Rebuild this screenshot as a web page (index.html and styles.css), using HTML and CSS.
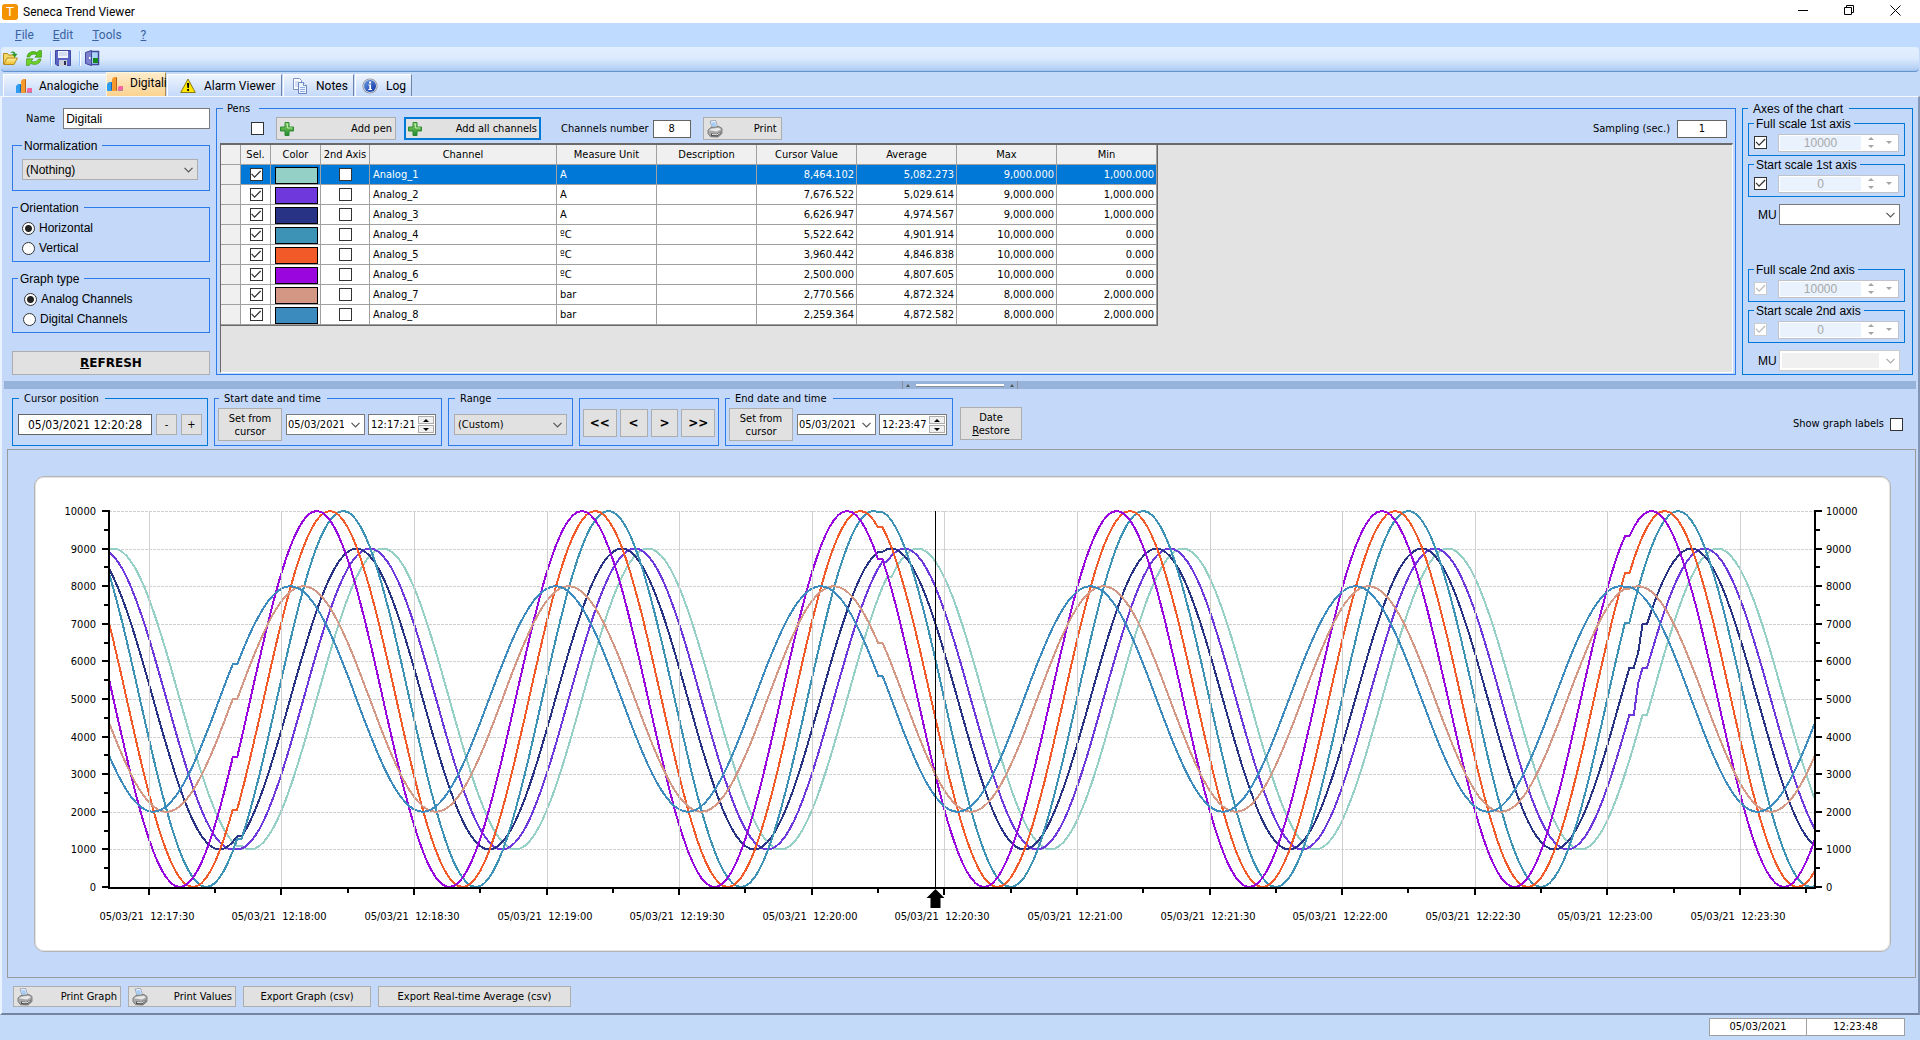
FILE: index.html
```html
<!DOCTYPE html>
<html lang="en">
<head>
<meta charset="utf-8">
<title>Seneca Trend Viewer</title>
<link rel="stylesheet" href="styles.css">
</head>
<body>
<svg class="sprite" aria-hidden="true">
  <defs>
    <linearGradient id="g-green" x1="0" y1="0" x2="0" y2="1"><stop offset="0" stop-color="#8fd46a"/><stop offset="1" stop-color="#1f8a2a"/></linearGradient>
    <linearGradient id="g-blue" x1="0" y1="0" x2="1" y2="1"><stop offset="0" stop-color="#6a9be8"/><stop offset="1" stop-color="#0b2f9c"/></linearGradient>
    <linearGradient id="g-folder" x1="0" y1="0" x2="0" y2="1"><stop offset="0" stop-color="#fff2a0"/><stop offset="1" stop-color="#f0bd2c"/></linearGradient>
  </defs>
  <symbol id="i-bars" viewBox="0 0 16 16">
    <path d="M0 8l2-2h3v8l-1 1H0z" fill="#2f9df0"/><path d="M4 7l1-1v8l-1 1z" fill="#1767b8"/>
    <path d="M5 3l2-2h3v13l-1 1H5z" fill="#f79a2e"/><path d="M9 2l1-1v13l-1 1z" fill="#b5641a"/>
    <path d="M11 11l1-1h4v4l-1 1h-4z" fill="#f5679f"/>
    <path d="M9 15l7-1v1z" fill="#8f8fa0"/>
  </symbol>
  <symbol id="i-warn" viewBox="0 0 16 16">
    <path d="M8 1L15.300 14.500H.7z" fill="#ffe600" stroke="#8a7a1a" stroke-width="1" stroke-linejoin="round"/>
    <path d="M7 5h2.200l-.4 5H7.400z" fill="#000"/><rect x="7.200" y="11" width="1.800" height="1.900" fill="#000"/>
  </symbol>
  <symbol id="i-notes" viewBox="0 0 16 16">
    <path d="M1.500.5h6l2 2v9h-8z" fill="#fff" stroke="#7c93c8"/>
    <path d="M3 4h4M3 6h4M3 8h3" stroke="#a9c0e8"/>
    <path d="M6.500 4.500h5l3 3v8h-8z" fill="#eef4ff" stroke="#6d86c2"/>
    <path d="M11.500 4.500v3h3" fill="#fff" stroke="#6d86c2"/><path d="M8 9.500h5M8 11.500h5M8 13.500h5" stroke="#8fb0e6"/>
  </symbol>
  <symbol id="i-info" viewBox="0 0 16 16">
    <circle cx="8" cy="8" r="7.600" fill="#8c8f98"/><circle cx="8" cy="8" r="6.800" fill="#d6dbe4"/>
    <circle cx="8" cy="8" r="6" fill="url(#g-blue)"/>
    <path d="M6.500 6.500H9V11h1v1H6.300v-1h1V7.500h-.8z" fill="#fff"/><rect x="7.100" y="3.500" width="2" height="2" fill="#fff"/>
  </symbol>
  <symbol id="i-open" viewBox="0 0 16 16">
    <path d="M.5 14V3.500h4l1 1.500h6v3" fill="#f5d968" stroke="#b48a1c"/>
    <path d="M.8 14.500L4 8h10.500L11 14.500z" fill="url(#g-folder)" stroke="#b48a1c"/>
    <path d="M7 3c2-2.500 5-2 5.500.8h2L11.800 7.500 9 4h1.700C10.200 2.600 8.600 2.300 7 3z" fill="#2e9a2b"/>
  </symbol>
  <symbol id="i-refresh" viewBox="0 0 16 16">
    <path d="M1 7C1.200 2.700 6.500 0 11 2.500L13 .6h2.600v6.600H8.800l2.100-2.200C8 3.300 4.500 4.500 3.600 7z" fill="#58c51a" stroke="#3a8a10" stroke-width=".6"/>
    <path d="M15 9c-.2 4.300-5.500 7-10 4.500L3 15.400H.4V8.800h6.800L5.100 11c2.900 1.700 6.400.5 7.300-2z" fill="#6fd32a" stroke="#3a8a10" stroke-width=".6"/>
  </symbol>
  <symbol id="i-save" viewBox="0 0 16 16">
    <path d="M.5.5h15v15H2L.5 14z" fill="#5a64c4" stroke="#3f489c"/>
    <rect x="3" y="1" width="10" height="7" fill="#eef2fb"/><path d="M4 3h8M4 5h8" stroke="#b9c6e6"/>
    <rect x="4" y="10" width="8" height="6" fill="#c9ceda"/><rect x="9" y="11" width="2" height="4" fill="#2b2f50"/>
  </symbol>
  <symbol id="i-exit" viewBox="0 0 16 16">
    <rect x="6.500" y="1.500" width="8" height="13" fill="#a9d4f5" stroke="#42479c" stroke-width="1.500"/>
    <path d="M1.500 2.500l6-2v15l-6-2z" fill="#7b81cf" stroke="#42479c"/><rect x="9" y="8" width="5" height="5" fill="#148a1c"/>
    <rect x="5" y="7" width="1.500" height="2" fill="#fff"/>
  </symbol>
  <symbol id="i-plus" viewBox="0 0 14 14">
    <path d="M5 .5h4V5h4.500v4H9v4.500H5V9H.5V5H5z" fill="url(#g-green)" stroke="#2f8a35"/><path d="M6 2h1.500v4H12" fill="none" stroke="#b9eaa0"/>
  </symbol>
  <symbol id="i-printer" viewBox="0 0 16 18">
    <path d="M3 1l5.500-.6L11 8 5.500 9z" fill="#f4f8ff" stroke="#8a96ad" stroke-width=".8"/><path d="M4 2.500l4-.4 1.300 4-4 .8z" fill="#a5cdf8"/>
    <path d="M1 10l3-2.500 8-1 3 2v5l-4 3.500-7.500-.3L1 13.500z" fill="#a9a9a9" stroke="#6a6a6a" stroke-width=".8"/>
    <path d="M1.500 10.200l3-1.500 7-.9 2.500 1.400-4 2.400z" fill="#e8e8e8"/><path d="M4 13.500l5.500.5 4-2.500v2.200l-3.500 2.800-6-.4z" fill="#4e4e4e"/>
    <path d="M5 14.500l5 .3 3-2" fill="none" stroke="#e8e8e8"/>
  </symbol>
</svg>

<header class="titlebar">
  <span class="app-icon">T</span>
  <h1>Seneca Trend Viewer</h1>
  <div class="window-buttons">
    <button aria-label="Minimize"><svg width="10" height="10"><path d="M0 5.500h10" stroke="#000"/></svg></button>
    <button aria-label="Restore"><svg width="10" height="10" fill="none" stroke="#000"><path d="M.5 2.500h7v7h-7zM2.500 2.500v-2h7v7h-2"/></svg></button>
    <button aria-label="Close"><svg width="11" height="11"><path d="M.5.5l10 10M10.500.5l-10 10" stroke="#000"/></svg></button>
  </div>
</header>

<nav class="menubar">
  <a href="#"><u>F</u>ile</a><a href="#"><u>E</u>dit</a><a href="#"><u>T</u>ools</a><a href="#"><u>?</u></a>
</nav>

<div class="toolbar">
  <button aria-label="Open"><svg class="icon"><use href="#i-open"/></svg></button>
  <button aria-label="Reload"><svg class="icon"><use href="#i-refresh"/></svg></button>
  <i class="sep"></i>
  <button aria-label="Save"><svg class="icon"><use href="#i-save"/></svg></button>
  <i class="sep"></i>
  <button aria-label="Exit"><svg class="icon"><use href="#i-exit"/></svg></button>
</div>

<div class="tabs" role="tablist">
  <button role="tab" class="tab tab-first"><svg class="icon"><use href="#i-bars"/></svg>Analogiche</button>
  <button role="tab" class="tab active" aria-selected="true"><svg class="icon"><use href="#i-bars"/></svg>Digitali</button>
  <button role="tab" class="tab tab-alarm"><svg class="icon"><use href="#i-warn"/></svg>Alarm Viewer</button>
  <button role="tab" class="tab tab-notes"><svg class="icon"><use href="#i-notes"/></svg>Notes</button>
  <button role="tab" class="tab tab-log"><svg class="icon"><use href="#i-info"/></svg>Log</button>
</div>

<main class="page">
  <section class="settings">
    <div class="side">
      <div class="name-row"><label for="name">Name</label><input id="name" class="box" value="Digitali"></div>
      <fieldset class="group norm">
        <legend>Normalization</legend>
        <select class="combo grey" aria-label="Normalization"><option>(Nothing)</option></select>
      </fieldset>
      <fieldset class="group radios">
        <legend>Orientation</legend>
        <label><input type="radio" name="orient" checked>Horizontal</label>
        <label><input type="radio" name="orient">Vertical</label>
      </fieldset>
      <fieldset class="group radios graph-type">
        <legend>Graph type</legend>
        <label><input type="radio" name="gtype" checked>Analog Channels</label>
        <label><input type="radio" name="gtype">Digital Channels</label>
      </fieldset>
      <button class="btn refresh"><u>R</u>EFRESH</button>
    </div>

    <fieldset class="group pens">
      <legend>Pens</legend>
      <div class="pens-bar">
        <input type="checkbox" aria-label="Select all pens">
        <button class="btn with-icon add-pen"><svg class="icon-plus"><use href="#i-plus"/></svg>Add pen</button>
        <button class="btn with-icon add-all"><svg class="icon-plus"><use href="#i-plus"/></svg>Add all channels</button>
        <label for="chnum">Channels number</label><input id="chnum" class="box small center chnum" value="8">
        <button class="btn with-icon print"><svg class="icon-print"><use href="#i-printer"/></svg>Print</button>
        <label for="sampling" class="push">Sampling (sec.)</label><input id="sampling" class="box small center sampling" value="1">
      </div>
      <div class="grid-area">
        <table class="pen-table">
          <colgroup><col class="c-head"><col class="c-sel"><col class="c-color"><col class="c-axis"><col class="c-channel"><col class="c-num"><col class="c-num"><col class="c-num"><col class="c-num"><col class="c-num"><col class="c-num"></colgroup>
          <thead><tr><th></th><th>Sel.</th><th>Color</th><th>2nd Axis</th><th>Channel</th><th>Measure Unit</th><th>Description</th><th>Cursor Value</th><th>Average</th><th>Max</th><th>Min</th></tr></thead>
          <tbody id="pen-rows"></tbody>
        </table>
      </div>
    </fieldset>

    <fieldset class="group win axes">
      <legend>Axes of the chart</legend>
      <fieldset class="group win scale">
        <legend>Full scale 1st axis</legend>
        <input type="checkbox" checked aria-label="Auto full scale 1st axis">
        <span class="spinner"><input value="10000" disabled aria-label="Full scale 1st axis"><span class="updown"></span><span class="drop"></span></span>
      </fieldset>
      <fieldset class="group win scale">
        <legend>Start scale 1st axis</legend>
        <input type="checkbox" checked aria-label="Auto start scale 1st axis">
        <span class="spinner"><input value="0" disabled aria-label="Start scale 1st axis"><span class="updown"></span><span class="drop"></span></span>
      </fieldset>
      <div class="mu"><label for="mu1">MU</label><select id="mu1" class="combo white"><option></option></select></div>
      <fieldset class="group win scale second">
        <legend>Full scale 2nd axis</legend>
        <input type="checkbox" checked disabled aria-label="Auto full scale 2nd axis">
        <span class="spinner"><input value="10000" disabled aria-label="Full scale 2nd axis"><span class="updown"></span><span class="drop"></span></span>
      </fieldset>
      <fieldset class="group win scale">
        <legend>Start scale 2nd axis</legend>
        <input type="checkbox" checked disabled aria-label="Auto start scale 2nd axis">
        <span class="spinner"><input value="0" disabled aria-label="Start scale 2nd axis"><span class="updown"></span><span class="drop"></span></span>
      </fieldset>
      <div class="mu"><label for="mu2">MU</label><select id="mu2" class="combo white" disabled><option></option></select></div>
    </fieldset>
  </section>

  <div class="splitter"><span class="grip"><b></b><em></em><b></b></span></div>

  <section class="controls">
    <fieldset class="group win range-group cursor-group">
      <legend>Cursor position</legend>
      <input class="box center cursor-box" value="05/03/2021 12:20:28" aria-label="Cursor position">
      <button class="btn step">-</button><button class="btn step">+</button>
    </fieldset>
    <fieldset class="group range-group dates">
      <legend>Start date and time</legend>
      <button class="btn from-cursor">Set from<br>cursor</button>
      <select class="combo white date" aria-label="Start date"><option>05/03/2021</option></select>
      <span class="time"><input value="12:17:21" aria-label="Start time"><span class="time-spin"><button class="up" aria-label="Up"></button><button class="down" aria-label="Down"></button></span></span>
    </fieldset>
    <fieldset class="group range-group range">
      <legend>Range</legend>
      <select class="combo grey" aria-label="Range"><option>(Custom)</option></select>
    </fieldset>
    <fieldset class="group nav" aria-label="Move range">
      <button class="btn wide">&lt;&lt;</button><button class="btn">&lt;</button><button class="btn">&gt;</button><button class="btn wide">&gt;&gt;</button>
    </fieldset>
    <fieldset class="group range-group dates">
      <legend>End date and time</legend>
      <button class="btn from-cursor">Set from<br>cursor</button>
      <select class="combo white date" aria-label="End date"><option>05/03/2021</option></select>
      <span class="time"><input value="12:23:47" aria-label="End time"><span class="time-spin"><button class="up" aria-label="Up"></button><button class="down" aria-label="Down"></button></span></span>
    </fieldset>
    <button class="btn restore">Date<br><u>R</u>estore</button>
    <label class="show-labels">Show graph labels<input type="checkbox"></label>
  </section>

  <section class="chart-frame">
    <div class="chart-card"><svg id="chart" role="img" aria-label="Trend of eight analog channels"></svg></div>
  </section>

  <footer class="actions">
    <button class="btn with-icon pg"><svg class="icon-print"><use href="#i-printer"/></svg>Print Graph</button>
    <button class="btn with-icon pg"><svg class="icon-print"><use href="#i-printer"/></svg>Print Values</button>
    <button class="btn export">Export Graph (csv)</button>
    <button class="btn export-avg">Export Real-time Average (csv)</button>
  </footer>
</main>

<div class="statusbar"><span>05/03/2021</span><span>12:23:48</span></div>
<script src="chart.js"></script>
</body>
</html>
```

FILE: styles.css
```css
:root {
  --panel: #c4d9fa;
  --group: #2c7be8;
  --win: #0078d7;
  --btn: #e1e1e1;
  --btn-edge: #adadad;
  --tahoma: "DejaVu Sans Condensed", "DejaVu Sans", sans-serif;
  --arial: "Liberation Sans", Arial, sans-serif;
  --segoe: Roboto, "Open Sans", sans-serif;
  --chevron: url("data:image/svg+xml,%3Csvg xmlns='http://www.w3.org/2000/svg' width='9' height='6'%3E%3Cpath d='M.5 .8l4 4 4-4' fill='none' stroke='%23555' stroke-width='1.200'/%3E%3C/svg%3E");
  --chevron-off: url("data:image/svg+xml,%3Csvg xmlns='http://www.w3.org/2000/svg' width='9' height='6'%3E%3Cpath d='M.5 .8l4 4 4-4' fill='none' stroke='%23aaa' stroke-width='1.200'/%3E%3C/svg%3E");
}
* { box-sizing: border-box; }
body {
  margin: 0;
  min-height: 100vh;
  display: flex;
  flex-direction: column;
  background: #c4daf9;
  color: #000;
  font: 11px/14px var(--tahoma);
}
button, input, select { font: inherit; color: inherit; margin: 0; }
button { padding: 0; cursor: default; }
.sprite { position: absolute; width: 0; height: 0; }
.icon { width: 16px; height: 16px; flex: none; display: block; }
.icon-plus { width: 14px; height: 14px; }
.icon-print { width: 16px; height: 18px; }

.titlebar { display: flex; align-items: center; height: 23px; padding-left: 2px; background: #fff; }
.app-icon {
  width: 16px; height: 16px; border-radius: 3px; background: #f49200; color: #fff;
  font: 13px/16px var(--arial); text-align: center;
}
.titlebar h1 { margin: 0 0 0 5px; font: 12px/16px var(--segoe); }
.window-buttons { align-self: flex-start; margin-left: auto; padding-right: 2px; display: flex; }
.window-buttons button { width: 46px; height: 20px; border: 0; background: none; display: flex; align-items: center; justify-content: center; }

.menubar { display: flex; gap: 19px; height: 24px; padding-left: 15px; background: #bfdbff; font: 12px/24px var(--segoe); }
.menubar a { color: #3b629f; text-decoration: none; }

.toolbar {
  display: flex; align-items: center; height: 25px; padding: 0 0 2px 2px; margin: 0 1px;
  border-radius: 4px; border-bottom: 1px solid #6593cf;
  background: linear-gradient(#e3efff, #dbe9fd 50%, #b3d0f5 92%, #a3c2ea);
}
.toolbar button { width: 23px; height: 20px; border: 0; background: none; }
.toolbar .sep { width: 2px; height: 15px; margin: 0 3px 0 1px; border-left: 1px solid #9ac6ff; background: #fff; }

.tabs { display: flex; align-items: flex-end; height: 24px; padding-left: 3px; gap: 1px; }
.tab {
  display: flex; align-items: center; gap: 8px; height: 22px; padding: 0 0 0 8px;
  border: solid; border-width: 1px 1px 0 1px; border-color: #fff #6f86a8 #fff #fff;
  background: linear-gradient(#eef4fd, #c4d9fa);
  font: 12px/16px var(--segoe);
}
.tab-first { width: 103px; padding-left: 12px; gap: 7px; border-right: 0; }
.tab.active { width: 60px; height: 24px; margin-left: -1px; padding: 0 0 3px; gap: 7px; background: linear-gradient(#fdebca, #fbd391); border-color: #fff6e0 #a98a52 #fff #fff6e0; }
.tab-alarm { width: 115px; padding-left: 12px; }
.tab-notes { width: 71px; }
.tab-log { width: 57px; padding-left: 6px; }
.tab.active .icon { margin-top: 2px; }

.page {
  flex: 1; display: flex; flex-direction: column;
  border: solid; border-width: 1px 2px 2px 2px; border-color: #f4f8ff #8496b5 #74839e #eaf2ff;
  background: var(--panel);
}
.group { margin: 0; padding: 0; min-width: 0; border: 1px solid var(--group); }
.group.win { border-color: var(--win); }
.group > legend { padding: 0 4px; height: 15px; line-height: 16px; }

.settings { display: grid; grid-template-columns: 198px minmax(0, 1fr) 171px; gap: 6px; padding: 4px 5px 6px 10px; }
.side { display: flex; flex-direction: column; gap: 9px; padding-top: 7px; font: 12px/14px var(--arial); }
.side legend { padding: 0 5px 0 2px; }
.name-row { display: flex; align-items: center; gap: 8px; padding-left: 14px; font: 11px/14px var(--tahoma); }
.name-row .box { flex: 1; min-width: 0; font: 12px/14px var(--arial); }
.box { height: 21px; padding: 0 2px; border: 1px solid #7a7a7a; background: #fff; }
.box.small { height: 18px; border-color: #646464; }
.center { text-align: center; }
.norm { padding: 6px 11px 10px 9px; }
.combo {
  appearance: none; width: 100%; height: 21px; padding: 0 20px 0 3px; border: 1px solid #adadad; border-radius: 0; display: block;
  background: #e1e1e1 var(--chevron) no-repeat right 4px center;
}
.combo.white { background-color: #fff; border-color: #7a7a7a; opacity: 1; }
.combo.white:disabled {
  padding: 2px 20px 2px 2px; border-color: #ccc;
  background: var(--chevron-off) no-repeat right 4px center, linear-gradient(#f0f0f0, #f0f0f0) content-box no-repeat, #fff;
}
.radios { padding: 3px 9px; }
.radios legend { margin-left: -4px; }
.radios label { display: flex; align-items: center; gap: 4px; height: 20px; }
.graph-type label { padding-left: 2px; }
.graph-type label + label { padding-left: 1px; }
input[type=radio] { appearance: none; width: 13px; height: 13px; border: 1px solid #333; border-radius: 50%; background: #fff; }
input[type=radio]:checked { background: radial-gradient(circle, #222 0 3px, #fff 4px); }
input[type=checkbox] { appearance: none; flex: none; display: block; width: 13px; height: 13px; border: 1px solid #333; background: #fff; }
input[type=checkbox]:checked::before {
  content: ""; display: block; width: 11px; height: 11px; background: #333;
  clip-path: polygon(6% 48%, 14% 42%, 37% 66%, 88% 14%, 96% 22%, 37% 82%);
}
input[type=checkbox]:disabled { border-color: #ccc; }
input[type=checkbox]:disabled::before { background: #bbb; }

.btn { border: 1px solid var(--btn-edge); background: var(--btn); }
.btn.with-icon { display: flex; align-items: center; justify-content: space-between; height: 23px; padding: 0 3px; }
.refresh { height: 24px; margin-top: 9px; font: bold 12px/14px "DejaVu Sans", sans-serif; }

.pens { display: flex; flex-direction: column; padding: 1px 2px 1px 3px; }
.pens > legend { margin-left: 3px; padding-right: 9px; }
.pens-bar { display: flex; align-items: center; padding: 0 6px 0 31px; }
.add-pen { width: 120px; margin-left: 12px; }
.btn.add-all { width: 137px; margin: 0 20px 0 8px; padding: 0 2px; border: 2px solid var(--win); }
.chnum { width: 38px; margin-left: 4px; }
.btn.print { width: 79px; margin-left: 12px; padding-right: 4px; }
.push { margin-left: auto; }
.sampling { width: 50px; margin-left: 7px; }
.grid-area {
  flex: 1; margin-top: 3px; height: 231px; background: #e3e3e3;
  border: solid; border-width: 2px 1px 1px; border-color: #696969 #fff #fff #696969;
}
.pen-table { width: 937px; table-layout: fixed; border-collapse: separate; border-spacing: 0; border-right: 1px solid #696969; border-bottom: 1px solid #696969; }
.c-head { width: 20px; } .c-sel { width: 30px; } .c-color { width: 50px; } .c-axis { width: 49px; } .c-channel { width: 187px; } .c-num { width: 100px; }
.pen-table th, .pen-table td { height: 20px; padding: 0 2px 0 3px; border: solid #a0a0a0; border-width: 0 1px 1px 0; overflow: hidden; white-space: nowrap; }
.pen-table th { background: #f0f0f0; font-weight: normal; padding: 0; }
.pen-table td { background: #fff; }
.pen-table tr > :first-child { background: #f0f0f0; }
.pen-table td.num { text-align: right; }
.pen-table tr.selected td:not(:first-child) { background: var(--win); color: #fff; }
.pen-table td input { margin: 0 auto; }
.swatch { display: block; width: 43px; height: 17px; margin: 1px 0 0 1px; border: 1px solid #000; }

.axes { padding: 1px 7px 3px 5px; font: 12px/14px var(--arial); }
.axes > legend { padding: 0 6px 0 5px; }
.axes .scale { display: flex; align-items: center; height: 40px; padding: 1px 5px 2px; margin: 0 0 1px; }
.axes .scale > legend { padding: 0 3px 0 2px; }
.axes > .scale:first-of-type { margin-top: -1px; }
.spinner { display: flex; flex: 1; min-width: 0; height: 18px; margin-left: 11px; padding: 1px; border: 1px solid #c0c4ca; background: #fff; }
.spinner input { flex: 1; min-width: 0; padding: 0; border: 0; background: #e9f2fd; color: #a8a8a8; text-align: center; }
.updown, .drop { width: 19px; display: flex; flex-direction: column; align-items: center; justify-content: center; gap: 5px; }
.updown::before { content: ""; border: 3px solid transparent; border-top: 0; border-bottom-color: #a5a5a5; }
.updown::after, .drop::after { content: ""; border: 3px solid transparent; border-bottom: 0; border-top-color: #a5a5a5; }
.drop { width: 17px; }
.mu { display: flex; align-items: center; gap: 2px; padding: 6px 5px 0 10px; }
.mu .combo { flex: 1; min-width: 0; }
.axes .second { margin-top: 37px; }

.splitter { height: 8px; margin: 0 2px; background: #98b3d9; display: flex; justify-content: center; }
.grip { display: flex; align-items: center; justify-content: space-between; width: 116px; padding: 0 3px; border: solid #8a8f98; border-width: 0 1px; }
.grip b { border: 2px solid transparent; border-top: 0; border-bottom: 3px solid #555; }
.grip em { width: 88px; height: 3px; background: #fff; border-bottom: 1px solid #8a8f98; }

.controls { display: flex; align-items: flex-start; gap: 6px; padding: 2px 15px 3px 10px; }
.range-group { display: flex; align-items: center; gap: 4px; height: 55px; padding: 2px 5px 4px; }
.range-group > legend { margin-left: 1px; padding: 0 6px 0 5px; }
.cursor-group { width: 196px; }
.cursor-box { flex: 1; min-width: 0; font-size: 12px; padding: 0; border-color: #646464; }
.step { width: 21px; height: 21px; }
.dates { width: 228px; padding-left: 3px; }
.from-cursor { width: 65px; height: 33px; line-height: 13px; }
.combo.date { width: 79px; padding-left: 1px; }
.time { display: flex; width: 68px; height: 21px; margin-left: -1px; padding: 1px; border: 1px solid #7a7a7a; background: #fff; }
.time input { flex: 1; min-width: 0; padding: 0 0 0 1px; border: 0; background: none; }
.time-spin { width: 16px; display: flex; flex-direction: column; gap: 1px; }
.time-spin button { flex: 1; border: 1px solid #adadad; background: #f0f0f0; display: flex; align-items: center; justify-content: center; }
.time-spin .up::before { content: ""; border: 3px solid transparent; border-top: 0; border-bottom-color: #000; }
.time-spin .down::before { content: ""; border: 3px solid transparent; border-bottom: 0; border-top-color: #000; }
.range { width: 125px; }
.nav { display: flex; gap: 3px; width: 140px; height: 48px; margin-top: 7px; padding: 10px 3px 8px; }
.nav .btn { flex: 28; font: bold 12px/14px "DejaVu Sans", sans-serif; }
.nav .btn.wide { flex: 34; }
.restore { width: 62px; height: 33px; margin: 16px 0 0 1px; line-height: 13px; }
.show-labels { display: flex; align-items: center; gap: 6px; margin: 26px 0 0 auto; }

.chart-frame { flex: 1; display: flex; min-height: 400px; margin: 0 2px 0 5px; padding: 26px 24px 25px 26px; border: 1px solid #9a9a9a; }
.chart-card { flex: 1; position: relative; border: 1px solid #b4b4b4; border-radius: 10px; background: #fff; box-shadow: inset 0 0 0 1px #e4e4e4; }
#chart { position: absolute; inset: 0; width: 100%; height: 100%; display: block; }
#chart text { white-space: pre; }

.actions { display: flex; gap: 7px; padding: 8px 11px 6px; }
.actions .btn { height: 21px; }
.pg { width: 108px; }
.export { width: 128px; }
.export-avg { width: 193px; }

.statusbar { display: flex; justify-content: flex-end; height: 25px; padding: 3px 15px 4px 0; }
.statusbar span { width: 98px; border: 1px solid #a0a0a0; background: #fff; text-align: center; line-height: 16px; }
.statusbar span + span { margin-left: -1px; width: 99px; }
```

FILE: chart.js
```js
// Channel list: shared by the pen table and by the chart.
// peak: second of the first crest; hold / skip: seconds at which the logger repeated or skipped a sample.
const channels = [
  { name: 'Analog_1', color: '#94d0c6', unit: 'A', values: ['8,464.102', '5,082.273', '9,000.000', '1,000.000'], amp: 4000, peak: 61, hold: [29, 176, 347], skip: [] },
  { name: 'Analog_2', color: '#6e38dc', unit: 'A', values: ['7,676.522', '5,029.614', '9,000.000', '1,000.000'], amp: 4000, peak: 58, hold: [29, 175, 344, 347], skip: [345] },
  { name: 'Analog_3', color: '#293385', unit: 'A', values: ['6,626.947', '4,974.567', '9,000.000', '1,000.000'], amp: 4000, peak: 55, hold: [29, 174, 344, 347], skip: [346] },
  { name: 'Analog_4', color: '#3c93b5', unit: 'ºC', values: ['5,522.642', '4,901.914', '10,000.000', '0.000'], amp: 5000, peak: 52, hold: [29, 174, 343], skip: [] },
  { name: 'Analog_5', color: '#f25b27', unit: 'ºC', values: ['3,960.442', '4,846.838', '10,000.000', '0.000'], amp: 5000, peak: 49, hold: [28, 174, 343], skip: [] },
  { name: 'Analog_6', color: '#9a06de', unit: 'ºC', values: ['2,500.000', '4,807.605', '10,000.000', '0.000'], amp: 5000, peak: 46, hold: [28, 174, 343], skip: [] },
  { name: 'Analog_7', color: '#d39784', unit: 'bar', values: ['2,770.566', '4,872.324', '8,000.000', '2,000.000'], amp: 3000, peak: 43, hold: [28, 174, 343], skip: [] },
  { name: 'Analog_8', color: '#3b8bbe', unit: 'bar', values: ['2,259.364', '4,872.582', '8,000.000', '2,000.000'], amp: 3000, peak: 40, hold: [28, 174, 343], skip: [] },
];

document.getElementById('pen-rows').innerHTML = channels.map((c, i) => `
  <tr class="${i === 0 ? 'selected' : ''}"><td></td>
  <td><input type="checkbox" checked aria-label="Show ${c.name}"></td>
  <td><span class="swatch" style="background:${c.color}"></span></td>
  <td><input type="checkbox" aria-label="${c.name} on 2nd axis"></td>
  <td>${c.name}</td><td>${c.unit}</td><td></td>
  ${c.values.map(v => `<td class="num">${v}</td>`).join('')}</tr>`).join('');

const SECONDS = 386;            // 12:17:21 to 12:23:47
const START = 12 * 3600 + 17 * 60 + 21;
const CURSOR = 187;             // 12:20:28

function clock(t) {
  return [t / 3600, t / 60 % 60, t % 60].map(n => String(Math.floor(n)).padStart(2, '0')).join(':');
}

function draw() {
  const svg = document.getElementById('chart');
  const W = svg.clientWidth, H = svg.clientHeight;
  const L = 74, R = W - 75, T = 34, B = H - 64;
  const x = s => L + s * (R - L) / SECONDS;
  const y = v => B - v * (B - T) / 10000;
  const r = n => Math.round(n);
  let out = '';

  for (let v = 1000; v <= 10000; v += 1000) {
    out += `<path d="M${L} ${r(y(v)) + .5}H${R}" stroke="#d0d0d0" stroke-dasharray="3 1"/>`;
  }
  for (const c of channels) {
    let phase = 0, pts = [];
    for (let s = 0; s <= SECONDS; s++) {
      pts.push(x(s).toFixed(1) + ' ' + y(5000 + c.amp * Math.cos((phase - c.peak) * Math.PI / 30)).toFixed(1));
      phase += c.hold.includes(s) ? 0 : c.skip.includes(s) ? 2 : 1;
    }
    out += `<polyline points="${pts.join(' ')}" fill="none" stroke="${c.color}" stroke-width="2" shape-rendering="crispEdges"/>`;
  }
  let ticks = '';
  for (let s = 9; s <= SECONDS; s += 15) {
    const major = (s - 9) % 30 === 0;
    const px = r(x(s));
    ticks += `M${px} ${B + 1}v${major ? 7 : 5}`;
    if (major) {
      out += `<path d="M${px + .5} ${T}V${B}" stroke="#d0d0d0"/>`;
      out += `<text x="${px - 2}" y="${B + 33}" text-anchor="middle">05/03/21  ${clock(START + s)}</text>`;
    }
  }
  for (let v = 0; v <= 10000; v += 500) {
    const major = v % 1000 === 0, py = r(y(v)), len = major ? 7 : 5;
    ticks += `M${L - len} ${py}H${L}M${R} ${py}h${len}`;
    if (major) {
      out += `<text x="${L - 13}" y="${py + 4}" text-anchor="end">${v}</text><text x="${R + 11}" y="${py + 4}">${v}</text>`;
    }
  }
  out += `<path d="M${L} ${T - 1}V${B + 1}H${R}V${T - 1}${ticks}" fill="none" stroke="#000" stroke-width="2" shape-rendering="crispEdges"/>`;
  const cx = r(x(CURSOR)) + .5;
  out += `<path d="M${cx} ${T}V${B}" stroke="#000"/>`;
  out += `<path d="M${cx} ${B + 2}l9 9h-4v10h-10v-10h-4z"/>`;
  svg.innerHTML = out;
}
draw();
addEventListener('resize', draw);
```
